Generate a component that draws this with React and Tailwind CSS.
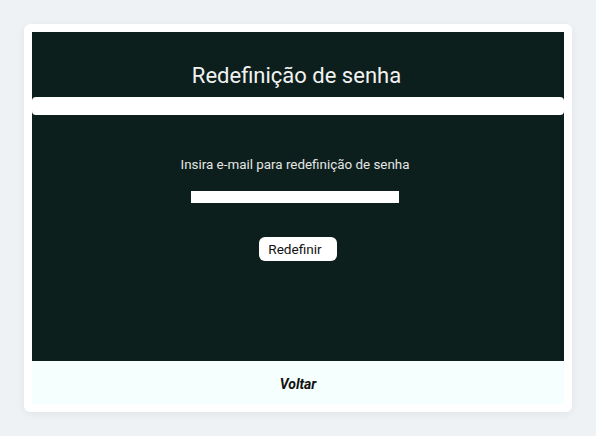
import React from 'react';

export default function App() {
  return (
    <div className="min-h-screen bg-[#eef2f5] p-6 font-['Roboto',sans-serif]">
      <div className="bg-white rounded-md shadow-[0_2px_8px_rgba(0,0,0,0.06)] p-2">
        {/* dark panel */}
        <div className="bg-[#0c1f1c] flex flex-col items-center pt-[30px] pb-[100px]">
          <h1 className="text-[22px] leading-7 text-[#f2f2f2] font-normal mr-[3px]">Redefinição de senha</h1>
          <div className="w-full h-[18px] bg-white rounded mt-[7px]" />
          <p className="mt-[41px] text-[13.4px] leading-[18px] text-[#e6e6e6] mr-1.5">Insira e-mail para redefinição de senha</p>
          <input type="email" className="mt-[17px] w-[208px] h-3 bg-white border-0 outline-none mr-1.5" />
          <button className="mt-[34px] w-[78px] h-6 bg-white rounded-md text-[13.6px] text-[#111] leading-6 pr-1.5">Redefinir</button>
        </div>
        {/* footer */}
        <div className="bg-[#f5fffe] h-[43px] flex items-center justify-center pt-1">
          <span className="text-[14px] font-bold italic text-[#111]">Voltar</span>
        </div>
      </div>
    </div>
  );
}
